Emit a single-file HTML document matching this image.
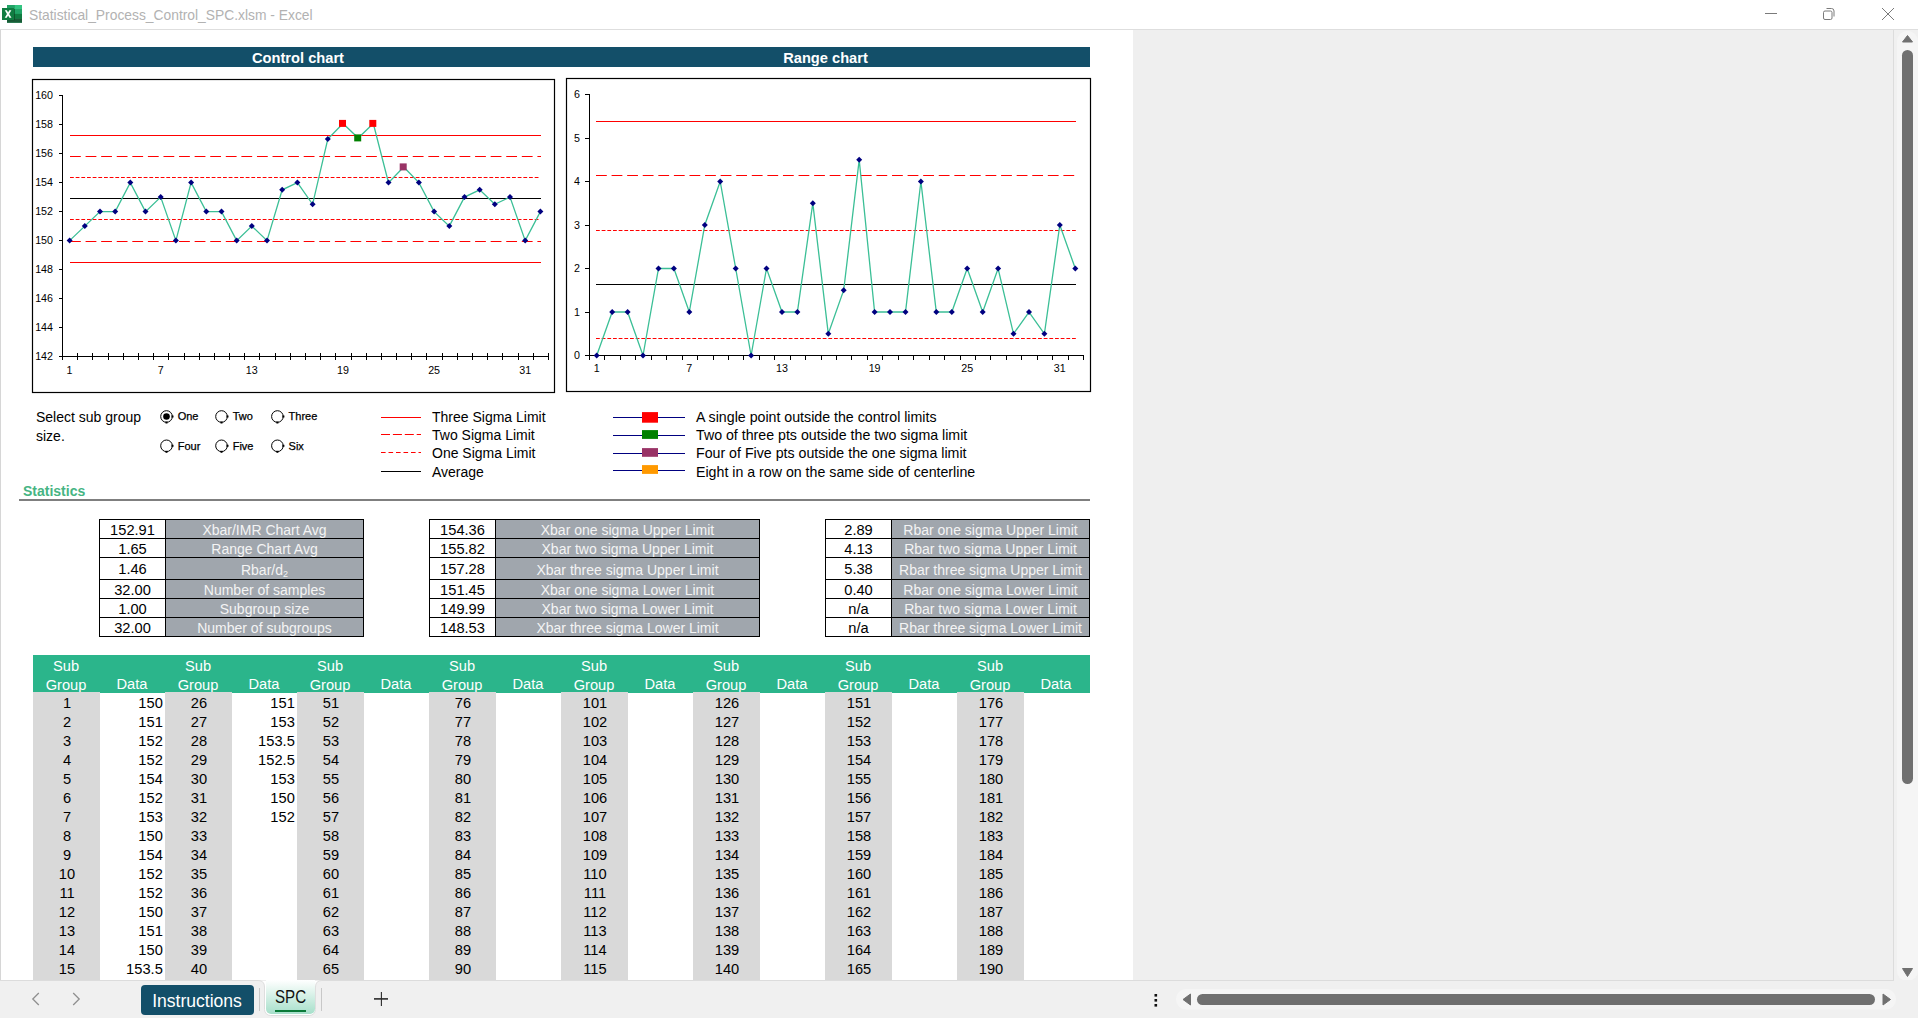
<!DOCTYPE html>
<html><head><meta charset="utf-8">
<style>
html,body{margin:0;padding:0;}
body{width:1918px;height:1018px;overflow:hidden;position:relative;background:#fff;font-family:"Liberation Sans", sans-serif;}
.abs{position:absolute;}
svg text{font-family:"Liberation Sans", sans-serif;}
.ax{font-size:10.7px;fill:#000;}
.rad{font-size:11px;fill:#000;stroke:#000;stroke-width:0.25px;}
.sv,.sl,.hd,.dc,.dr,.bl{position:absolute;}
.sv{background:#fff;color:#000;font-size:14.67px;text-align:center;}
.sl{background:#a0a6ad;color:#f4f4f4;font-size:14px;text-align:center;white-space:nowrap;}
.sl sub{font-size:9px;vertical-align:-2px;line-height:0;}
.bl{background:#000;}
.hd{color:#fff;font-size:14.67px;text-align:center;line-height:16px;}
.dc{font-size:14.67px;text-align:center;line-height:19px;height:19px;color:#000;}
.dr{font-size:14.67px;text-align:right;line-height:19px;height:19px;color:#000;}
.txt{position:absolute;font-size:14px;color:#000;white-space:nowrap;line-height:16px;}
</style></head><body>
<!-- title bar -->
<div class="abs" style="left:0;top:0;width:1918px;height:29px;background:#fff"></div>
<svg class="abs" style="left:0;top:0" width="24" height="28" viewBox="0 0 24 28">
  <rect x="7" y="5" width="15" height="17.7" fill="#21a366"/>
  <rect x="14.8" y="5" width="7.2" height="4.3" fill="#33c481"/>
  <rect x="14.8" y="9.3" width="7.2" height="4.6" fill="#21a366"/>
  <rect x="7" y="13.9" width="15" height="4.6" fill="#107c41"/>
  <rect x="7" y="18.5" width="15" height="4.2" fill="#185c37"/>
  <rect x="8" y="9" width="7" height="11.2" fill="#0b3d1f" opacity="0.6"/>
  <rect x="2" y="8" width="12" height="12" fill="#107c41"/>
  <path d="M4.8 10.2h2.1l1.2 2.3l1.2 -2.3h2.1l-2.2 3.8l2.3 3.8h-2.1l-1.3 -2.4l-1.3 2.4h-2.1l2.3 -3.8z" fill="#fff"/>
</svg>
<div class="txt" style="left:29px;top:5px;font-size:15px;color:#b2b2b2;line-height:19px;transform:scaleX(0.922);transform-origin:0 0">Statistical_Process_Control_SPC.xlsm - Excel</div>
<svg class="abs" style="left:1750px;top:0" width="168" height="29">
  <line x1="15" y1="13.5" x2="27" y2="13.5" stroke="#7a7a7a" stroke-width="1"/>
  <rect x="73.5" y="11" width="8.5" height="8.5" rx="1.5" fill="none" stroke="#7a7a7a" stroke-width="1"/>
  <path d="M76.5 8.5h5a2.5 2.5 0 0 1 2.5 2.5v5.5" fill="none" stroke="#7a7a7a" stroke-width="1"/>
  <path d="M132 8l12 12M144 8l-12 12" stroke="#7a7a7a" stroke-width="1"/>
</svg>
<div class="abs" style="left:0;top:29px;width:1918px;height:1px;background:#dedede"></div>
<!-- sheet area -->
<div class="abs" style="left:0;top:30px;width:1px;height:950px;background:#d6d6d6"></div>
<div class="abs" style="left:1133px;top:30px;width:760px;height:950px;background:#efefef"></div>
<div class="abs" style="left:1893px;top:30px;width:1px;height:950px;background:#dcdcdc"></div>
<div class="abs" style="left:1894px;top:30px;width:24px;height:950px;background:#f0f0f0"></div>
<div class="abs" style="left:1897px;top:31px;width:21px;height:950px;background:#f5f5f5;border-radius:10px"></div>
<svg class="abs" style="left:1894px;top:30px" width="24" height="950">
  <path d="M13.5 5.5l5 6.5h-10z" fill="#707070" stroke="#707070" stroke-width="1" stroke-linejoin="round"/>
  <rect x="8" y="20" width="11" height="734" rx="5.5" fill="#707070"/>
  <path d="M13.5 946.5l5 -8h-10z" fill="#707070" stroke="#707070" stroke-width="1" stroke-linejoin="round"/>
</svg>
<!-- chart headers -->
<div class="abs" style="left:33px;top:47px;width:1057px;height:20px;background:#134f69"></div>
<div class="txt" style="left:33px;top:49px;width:530px;text-align:center;color:#fff;font-weight:bold;font-size:14.67px;line-height:18px">Control chart</div>
<div class="txt" style="left:562px;top:49px;width:527px;text-align:center;color:#fff;font-weight:bold;font-size:14.67px;line-height:18px">Range chart</div>
<svg class="abs" style="left:0;top:0" width="1918" height="1018">
<rect x="32.5" y="79.5" width="522" height="313" fill="#fff" stroke="#000" stroke-width="1.2"/>
<line x1="62.5" y1="95" x2="62.5" y2="356.5" stroke="#000" stroke-width="1"/>
<line x1="62" y1="356.5" x2="548" y2="356.5" stroke="#000" stroke-width="1"/>
<line x1="59" y1="356.5" x2="62.5" y2="356.5" stroke="#000" stroke-width="1"/>
<text x="53" y="359.9" text-anchor="end" class="ax">142</text>
<line x1="59" y1="327.5" x2="62.5" y2="327.5" stroke="#000" stroke-width="1"/>
<text x="53" y="330.9" text-anchor="end" class="ax">144</text>
<line x1="59" y1="298.5" x2="62.5" y2="298.5" stroke="#000" stroke-width="1"/>
<text x="53" y="301.9" text-anchor="end" class="ax">146</text>
<line x1="59" y1="269.5" x2="62.5" y2="269.5" stroke="#000" stroke-width="1"/>
<text x="53" y="272.9" text-anchor="end" class="ax">148</text>
<line x1="59" y1="240.5" x2="62.5" y2="240.5" stroke="#000" stroke-width="1"/>
<text x="53" y="243.9" text-anchor="end" class="ax">150</text>
<line x1="59" y1="211.5" x2="62.5" y2="211.5" stroke="#000" stroke-width="1"/>
<text x="53" y="214.9" text-anchor="end" class="ax">152</text>
<line x1="59" y1="182.5" x2="62.5" y2="182.5" stroke="#000" stroke-width="1"/>
<text x="53" y="185.9" text-anchor="end" class="ax">154</text>
<line x1="59" y1="153.5" x2="62.5" y2="153.5" stroke="#000" stroke-width="1"/>
<text x="53" y="156.9" text-anchor="end" class="ax">156</text>
<line x1="59" y1="124.5" x2="62.5" y2="124.5" stroke="#000" stroke-width="1"/>
<text x="53" y="127.9" text-anchor="end" class="ax">158</text>
<line x1="59" y1="95.5" x2="62.5" y2="95.5" stroke="#000" stroke-width="1"/>
<text x="53" y="98.9" text-anchor="end" class="ax">160</text>
<line x1="62.5" y1="353" x2="62.5" y2="360" stroke="#000" stroke-width="1"/>
<line x1="77.5" y1="353" x2="77.5" y2="360" stroke="#000" stroke-width="1"/>
<line x1="92.5" y1="353" x2="92.5" y2="360" stroke="#000" stroke-width="1"/>
<line x1="108.5" y1="353" x2="108.5" y2="360" stroke="#000" stroke-width="1"/>
<line x1="123.5" y1="353" x2="123.5" y2="360" stroke="#000" stroke-width="1"/>
<line x1="138.5" y1="353" x2="138.5" y2="360" stroke="#000" stroke-width="1"/>
<line x1="153.5" y1="353" x2="153.5" y2="360" stroke="#000" stroke-width="1"/>
<line x1="168.5" y1="353" x2="168.5" y2="360" stroke="#000" stroke-width="1"/>
<line x1="184.5" y1="353" x2="184.5" y2="360" stroke="#000" stroke-width="1"/>
<line x1="199.5" y1="353" x2="199.5" y2="360" stroke="#000" stroke-width="1"/>
<line x1="214.5" y1="353" x2="214.5" y2="360" stroke="#000" stroke-width="1"/>
<line x1="229.5" y1="353" x2="229.5" y2="360" stroke="#000" stroke-width="1"/>
<line x1="244.5" y1="353" x2="244.5" y2="360" stroke="#000" stroke-width="1"/>
<line x1="259.5" y1="353" x2="259.5" y2="360" stroke="#000" stroke-width="1"/>
<line x1="275.5" y1="353" x2="275.5" y2="360" stroke="#000" stroke-width="1"/>
<line x1="290.5" y1="353" x2="290.5" y2="360" stroke="#000" stroke-width="1"/>
<line x1="305.5" y1="353" x2="305.5" y2="360" stroke="#000" stroke-width="1"/>
<line x1="320.5" y1="353" x2="320.5" y2="360" stroke="#000" stroke-width="1"/>
<line x1="335.5" y1="353" x2="335.5" y2="360" stroke="#000" stroke-width="1"/>
<line x1="351.5" y1="353" x2="351.5" y2="360" stroke="#000" stroke-width="1"/>
<line x1="366.5" y1="353" x2="366.5" y2="360" stroke="#000" stroke-width="1"/>
<line x1="381.5" y1="353" x2="381.5" y2="360" stroke="#000" stroke-width="1"/>
<line x1="396.5" y1="353" x2="396.5" y2="360" stroke="#000" stroke-width="1"/>
<line x1="411.5" y1="353" x2="411.5" y2="360" stroke="#000" stroke-width="1"/>
<line x1="426.5" y1="353" x2="426.5" y2="360" stroke="#000" stroke-width="1"/>
<line x1="442.5" y1="353" x2="442.5" y2="360" stroke="#000" stroke-width="1"/>
<line x1="457.5" y1="353" x2="457.5" y2="360" stroke="#000" stroke-width="1"/>
<line x1="472.5" y1="353" x2="472.5" y2="360" stroke="#000" stroke-width="1"/>
<line x1="487.5" y1="353" x2="487.5" y2="360" stroke="#000" stroke-width="1"/>
<line x1="502.5" y1="353" x2="502.5" y2="360" stroke="#000" stroke-width="1"/>
<line x1="518.5" y1="353" x2="518.5" y2="360" stroke="#000" stroke-width="1"/>
<line x1="533.5" y1="353" x2="533.5" y2="360" stroke="#000" stroke-width="1"/>
<line x1="548.5" y1="353" x2="548.5" y2="360" stroke="#000" stroke-width="1"/>
<text x="69.6" y="374" text-anchor="middle" class="ax">1</text>
<text x="160.7" y="374" text-anchor="middle" class="ax">7</text>
<text x="251.8" y="374" text-anchor="middle" class="ax">13</text>
<text x="343.0" y="374" text-anchor="middle" class="ax">19</text>
<text x="434.1" y="374" text-anchor="middle" class="ax">25</text>
<text x="525.2" y="374" text-anchor="middle" class="ax">31</text>
<line x1="70.0" y1="135.5" x2="541.0" y2="135.5" stroke="#ff0000" stroke-width="1"/>
<line x1="70.0" y1="156.5" x2="541.0" y2="156.5" stroke="#ff0000" stroke-width="1" stroke-dasharray="10.8 4.78"/>
<line x1="70.0" y1="177.5" x2="539.0" y2="177.5" stroke="#ff0000" stroke-width="1" stroke-dasharray="3.8 1.867"/>
<line x1="70.0" y1="198.5" x2="541.0" y2="198.5" stroke="#000000" stroke-width="1"/>
<line x1="70.0" y1="219.5" x2="539.0" y2="219.5" stroke="#ff0000" stroke-width="1" stroke-dasharray="3.8 1.867"/>
<line x1="70.0" y1="241.5" x2="541.0" y2="241.5" stroke="#ff0000" stroke-width="1" stroke-dasharray="10.8 4.78"/>
<line x1="70.0" y1="262.5" x2="541.0" y2="262.5" stroke="#ff0000" stroke-width="1"/>
<polyline points="69.6,240.6 84.8,226.1 100.0,211.6 115.2,211.6 130.3,182.6 145.5,211.6 160.7,197.1 175.9,240.6 191.1,182.6 206.3,211.6 221.5,211.6 236.7,240.6 251.8,226.1 267.0,240.6 282.2,189.8 297.4,182.6 312.6,204.3 327.8,139.1 343.0,123.5 358.2,138.0 373.3,123.5 388.5,182.6 403.7,167.0 418.9,182.6 434.1,211.6 449.3,226.1 464.5,197.1 479.7,189.8 494.8,204.3 510.0,197.1 525.2,240.6 540.4,211.6" fill="none" stroke="#3bbf96" stroke-width="1.3"/>
<path d="M69.6 237.6l3 3l-3 3l-3 -3z" fill="#000080"/>
<path d="M84.8 223.1l3 3l-3 3l-3 -3z" fill="#000080"/>
<path d="M100.0 208.6l3 3l-3 3l-3 -3z" fill="#000080"/>
<path d="M115.2 208.6l3 3l-3 3l-3 -3z" fill="#000080"/>
<path d="M130.3 179.6l3 3l-3 3l-3 -3z" fill="#000080"/>
<path d="M145.5 208.6l3 3l-3 3l-3 -3z" fill="#000080"/>
<path d="M160.7 194.1l3 3l-3 3l-3 -3z" fill="#000080"/>
<path d="M175.9 237.6l3 3l-3 3l-3 -3z" fill="#000080"/>
<path d="M191.1 179.6l3 3l-3 3l-3 -3z" fill="#000080"/>
<path d="M206.3 208.6l3 3l-3 3l-3 -3z" fill="#000080"/>
<path d="M221.5 208.6l3 3l-3 3l-3 -3z" fill="#000080"/>
<path d="M236.7 237.6l3 3l-3 3l-3 -3z" fill="#000080"/>
<path d="M251.8 223.1l3 3l-3 3l-3 -3z" fill="#000080"/>
<path d="M267.0 237.6l3 3l-3 3l-3 -3z" fill="#000080"/>
<path d="M282.2 186.8l3 3l-3 3l-3 -3z" fill="#000080"/>
<path d="M297.4 179.6l3 3l-3 3l-3 -3z" fill="#000080"/>
<path d="M312.6 201.3l3 3l-3 3l-3 -3z" fill="#000080"/>
<path d="M327.8 136.1l3 3l-3 3l-3 -3z" fill="#000080"/>
<rect x="339.0" y="119.9" width="7" height="7" fill="#ff0000"/>
<rect x="354.2" y="134.4" width="7" height="7" fill="#008000"/>
<rect x="369.3" y="119.9" width="7" height="7" fill="#ff0000"/>
<path d="M388.5 179.6l3 3l-3 3l-3 -3z" fill="#000080"/>
<rect x="399.7" y="163.4" width="7" height="7" fill="#993366"/>
<path d="M418.9 179.6l3 3l-3 3l-3 -3z" fill="#000080"/>
<path d="M434.1 208.6l3 3l-3 3l-3 -3z" fill="#000080"/>
<path d="M449.3 223.1l3 3l-3 3l-3 -3z" fill="#000080"/>
<path d="M464.5 194.1l3 3l-3 3l-3 -3z" fill="#000080"/>
<path d="M479.7 186.8l3 3l-3 3l-3 -3z" fill="#000080"/>
<path d="M494.8 201.3l3 3l-3 3l-3 -3z" fill="#000080"/>
<path d="M510.0 194.1l3 3l-3 3l-3 -3z" fill="#000080"/>
<path d="M525.2 237.6l3 3l-3 3l-3 -3z" fill="#000080"/>
<path d="M540.4 208.6l3 3l-3 3l-3 -3z" fill="#000080"/>
<rect x="566.5" y="78.5" width="524" height="313" fill="#fff" stroke="#000" stroke-width="1.2"/>
<line x1="589.5" y1="94" x2="589.5" y2="356" stroke="#000" stroke-width="1"/>
<line x1="585" y1="355.5" x2="1084" y2="355.5" stroke="#000" stroke-width="1"/>
<line x1="585" y1="355.5" x2="589.5" y2="355.5" stroke="#000" stroke-width="1"/>
<text x="580" y="359.4" text-anchor="end" class="ax">0</text>
<line x1="585" y1="312.5" x2="589.5" y2="312.5" stroke="#000" stroke-width="1"/>
<text x="580" y="315.9" text-anchor="end" class="ax">1</text>
<line x1="585" y1="268.5" x2="589.5" y2="268.5" stroke="#000" stroke-width="1"/>
<text x="580" y="272.4" text-anchor="end" class="ax">2</text>
<line x1="585" y1="225.5" x2="589.5" y2="225.5" stroke="#000" stroke-width="1"/>
<text x="580" y="228.9" text-anchor="end" class="ax">3</text>
<line x1="585" y1="181.5" x2="589.5" y2="181.5" stroke="#000" stroke-width="1"/>
<text x="580" y="185.4" text-anchor="end" class="ax">4</text>
<line x1="585" y1="138.5" x2="589.5" y2="138.5" stroke="#000" stroke-width="1"/>
<text x="580" y="141.9" text-anchor="end" class="ax">5</text>
<line x1="585" y1="94.5" x2="589.5" y2="94.5" stroke="#000" stroke-width="1"/>
<text x="580" y="98.4" text-anchor="end" class="ax">6</text>
<line x1="589.5" y1="355.5" x2="589.5" y2="360" stroke="#000" stroke-width="1"/>
<line x1="604.5" y1="355.5" x2="604.5" y2="360" stroke="#000" stroke-width="1"/>
<line x1="620.5" y1="355.5" x2="620.5" y2="360" stroke="#000" stroke-width="1"/>
<line x1="635.5" y1="355.5" x2="635.5" y2="360" stroke="#000" stroke-width="1"/>
<line x1="651.5" y1="355.5" x2="651.5" y2="360" stroke="#000" stroke-width="1"/>
<line x1="666.5" y1="355.5" x2="666.5" y2="360" stroke="#000" stroke-width="1"/>
<line x1="682.5" y1="355.5" x2="682.5" y2="360" stroke="#000" stroke-width="1"/>
<line x1="697.5" y1="355.5" x2="697.5" y2="360" stroke="#000" stroke-width="1"/>
<line x1="713.5" y1="355.5" x2="713.5" y2="360" stroke="#000" stroke-width="1"/>
<line x1="728.5" y1="355.5" x2="728.5" y2="360" stroke="#000" stroke-width="1"/>
<line x1="743.5" y1="355.5" x2="743.5" y2="360" stroke="#000" stroke-width="1"/>
<line x1="759.5" y1="355.5" x2="759.5" y2="360" stroke="#000" stroke-width="1"/>
<line x1="774.5" y1="355.5" x2="774.5" y2="360" stroke="#000" stroke-width="1"/>
<line x1="790.5" y1="355.5" x2="790.5" y2="360" stroke="#000" stroke-width="1"/>
<line x1="805.5" y1="355.5" x2="805.5" y2="360" stroke="#000" stroke-width="1"/>
<line x1="821.5" y1="355.5" x2="821.5" y2="360" stroke="#000" stroke-width="1"/>
<line x1="836.5" y1="355.5" x2="836.5" y2="360" stroke="#000" stroke-width="1"/>
<line x1="851.5" y1="355.5" x2="851.5" y2="360" stroke="#000" stroke-width="1"/>
<line x1="867.5" y1="355.5" x2="867.5" y2="360" stroke="#000" stroke-width="1"/>
<line x1="882.5" y1="355.5" x2="882.5" y2="360" stroke="#000" stroke-width="1"/>
<line x1="898.5" y1="355.5" x2="898.5" y2="360" stroke="#000" stroke-width="1"/>
<line x1="913.5" y1="355.5" x2="913.5" y2="360" stroke="#000" stroke-width="1"/>
<line x1="929.5" y1="355.5" x2="929.5" y2="360" stroke="#000" stroke-width="1"/>
<line x1="944.5" y1="355.5" x2="944.5" y2="360" stroke="#000" stroke-width="1"/>
<line x1="960.5" y1="355.5" x2="960.5" y2="360" stroke="#000" stroke-width="1"/>
<line x1="975.5" y1="355.5" x2="975.5" y2="360" stroke="#000" stroke-width="1"/>
<line x1="990.5" y1="355.5" x2="990.5" y2="360" stroke="#000" stroke-width="1"/>
<line x1="1006.5" y1="355.5" x2="1006.5" y2="360" stroke="#000" stroke-width="1"/>
<line x1="1021.5" y1="355.5" x2="1021.5" y2="360" stroke="#000" stroke-width="1"/>
<line x1="1037.5" y1="355.5" x2="1037.5" y2="360" stroke="#000" stroke-width="1"/>
<line x1="1052.5" y1="355.5" x2="1052.5" y2="360" stroke="#000" stroke-width="1"/>
<line x1="1068.5" y1="355.5" x2="1068.5" y2="360" stroke="#000" stroke-width="1"/>
<line x1="1083.5" y1="355.5" x2="1083.5" y2="360" stroke="#000" stroke-width="1"/>
<text x="596.7" y="372" text-anchor="middle" class="ax">1</text>
<text x="689.3" y="372" text-anchor="middle" class="ax">7</text>
<text x="782.0" y="372" text-anchor="middle" class="ax">13</text>
<text x="874.6" y="372" text-anchor="middle" class="ax">19</text>
<text x="967.2" y="372" text-anchor="middle" class="ax">25</text>
<text x="1059.8" y="372" text-anchor="middle" class="ax">31</text>
<line x1="596.0" y1="121.5" x2="1076.0" y2="121.5" stroke="#ff0000" stroke-width="1"/>
<line x1="596.0" y1="175.5" x2="1076.0" y2="175.5" stroke="#ff0000" stroke-width="1" stroke-dasharray="10.8 4.78"/>
<line x1="596.0" y1="230.5" x2="1076.0" y2="230.5" stroke="#ff0000" stroke-width="1" stroke-dasharray="3.8 1.867"/>
<line x1="596.0" y1="284.5" x2="1076.0" y2="284.5" stroke="#000000" stroke-width="1"/>
<line x1="596.0" y1="338.5" x2="1076.0" y2="338.5" stroke="#ff0000" stroke-width="1" stroke-dasharray="3.8 1.867"/>
<polyline points="596.7,355.5 612.2,312.0 627.6,312.0 643.0,355.5 658.5,268.5 673.9,268.5 689.3,312.0 704.8,225.0 720.2,181.5 735.7,268.5 751.1,355.5 766.5,268.5 782.0,312.0 797.4,312.0 812.8,203.2 828.3,333.8 843.7,290.2 859.2,159.8 874.6,312.0 890.0,312.0 905.5,312.0 920.9,181.5 936.3,312.0 951.8,312.0 967.2,268.5 982.7,312.0 998.1,268.5 1013.5,333.8 1029.0,312.0 1044.4,333.8 1059.8,225.0 1075.3,268.5" fill="none" stroke="#3bbf96" stroke-width="1.3"/>
<path d="M596.7 352.5l3 3l-3 3l-3 -3z" fill="#000080"/>
<path d="M612.2 309.0l3 3l-3 3l-3 -3z" fill="#000080"/>
<path d="M627.6 309.0l3 3l-3 3l-3 -3z" fill="#000080"/>
<path d="M643.0 352.5l3 3l-3 3l-3 -3z" fill="#000080"/>
<path d="M658.5 265.5l3 3l-3 3l-3 -3z" fill="#000080"/>
<path d="M673.9 265.5l3 3l-3 3l-3 -3z" fill="#000080"/>
<path d="M689.3 309.0l3 3l-3 3l-3 -3z" fill="#000080"/>
<path d="M704.8 222.0l3 3l-3 3l-3 -3z" fill="#000080"/>
<path d="M720.2 178.5l3 3l-3 3l-3 -3z" fill="#000080"/>
<path d="M735.7 265.5l3 3l-3 3l-3 -3z" fill="#000080"/>
<path d="M751.1 352.5l3 3l-3 3l-3 -3z" fill="#000080"/>
<path d="M766.5 265.5l3 3l-3 3l-3 -3z" fill="#000080"/>
<path d="M782.0 309.0l3 3l-3 3l-3 -3z" fill="#000080"/>
<path d="M797.4 309.0l3 3l-3 3l-3 -3z" fill="#000080"/>
<path d="M812.8 200.2l3 3l-3 3l-3 -3z" fill="#000080"/>
<path d="M828.3 330.8l3 3l-3 3l-3 -3z" fill="#000080"/>
<path d="M843.7 287.2l3 3l-3 3l-3 -3z" fill="#000080"/>
<path d="M859.2 156.8l3 3l-3 3l-3 -3z" fill="#000080"/>
<path d="M874.6 309.0l3 3l-3 3l-3 -3z" fill="#000080"/>
<path d="M890.0 309.0l3 3l-3 3l-3 -3z" fill="#000080"/>
<path d="M905.5 309.0l3 3l-3 3l-3 -3z" fill="#000080"/>
<path d="M920.9 178.5l3 3l-3 3l-3 -3z" fill="#000080"/>
<path d="M936.3 309.0l3 3l-3 3l-3 -3z" fill="#000080"/>
<path d="M951.8 309.0l3 3l-3 3l-3 -3z" fill="#000080"/>
<path d="M967.2 265.5l3 3l-3 3l-3 -3z" fill="#000080"/>
<path d="M982.7 309.0l3 3l-3 3l-3 -3z" fill="#000080"/>
<path d="M998.1 265.5l3 3l-3 3l-3 -3z" fill="#000080"/>
<path d="M1013.5 330.8l3 3l-3 3l-3 -3z" fill="#000080"/>
<path d="M1029.0 309.0l3 3l-3 3l-3 -3z" fill="#000080"/>
<path d="M1044.4 330.8l3 3l-3 3l-3 -3z" fill="#000080"/>
<path d="M1059.8 222.0l3 3l-3 3l-3 -3z" fill="#000080"/>
<path d="M1075.3 265.5l3 3l-3 3l-3 -3z" fill="#000080"/>
<line x1="381.0" y1="417.5" x2="421.0" y2="417.5" stroke="#ff0000" stroke-width="1.2"/>
<line x1="381.0" y1="434.5" x2="421.0" y2="434.5" stroke="#ff0000" stroke-width="1.1" stroke-dasharray="9 2.9"/>
<line x1="381.0" y1="452.5" x2="421.0" y2="452.5" stroke="#ff0000" stroke-width="1.1" stroke-dasharray="4.6 2.9"/>
<line x1="381.0" y1="471.5" x2="421.0" y2="471.5" stroke="#000000" stroke-width="1.2"/>
<line x1="613.0" y1="417.5" x2="685.0" y2="417.5" stroke="#000080" stroke-width="1"/>
<rect x="642" y="412.1" width="16" height="10.6" fill="#ff0000"/>
<line x1="613.0" y1="435.5" x2="685.0" y2="435.5" stroke="#000080" stroke-width="1"/>
<rect x="642" y="430.1" width="16" height="8.8" fill="#008000"/>
<line x1="613.0" y1="453.5" x2="685.0" y2="453.5" stroke="#000080" stroke-width="1"/>
<rect x="642" y="448.1" width="16" height="8.7" fill="#993366"/>
<line x1="613.0" y1="470.5" x2="685.0" y2="470.5" stroke="#000080" stroke-width="1"/>
<rect x="642" y="465.1" width="16" height="8.8" fill="#ff9900"/>
<circle cx="166.5" cy="416.5" r="5.8" fill="#fff" stroke="#000" stroke-width="1"/>
<rect x="165.5" y="421.5" width="2" height="2" fill="#000"/>
<rect x="171.5" y="415.5" width="2" height="2" fill="#000"/>
<circle cx="166.5" cy="416.5" r="3.3" fill="#000"/>
<text x="177.7" y="420.4" class="rad">One</text>
<circle cx="221.5" cy="416.5" r="5.8" fill="#fff" stroke="#000" stroke-width="1"/>
<rect x="220.5" y="421.5" width="2" height="2" fill="#000"/>
<rect x="226.5" y="415.5" width="2" height="2" fill="#000"/>
<text x="232.7" y="420.4" class="rad">Two</text>
<circle cx="277.4" cy="416.5" r="5.8" fill="#fff" stroke="#000" stroke-width="1"/>
<rect x="276.4" y="421.5" width="2" height="2" fill="#000"/>
<rect x="282.4" y="415.5" width="2" height="2" fill="#000"/>
<text x="288.6" y="420.4" class="rad">Three</text>
<circle cx="166.5" cy="445.8" r="5.8" fill="#fff" stroke="#000" stroke-width="1"/>
<rect x="165.5" y="450.8" width="2" height="2" fill="#000"/>
<rect x="171.5" y="444.8" width="2" height="2" fill="#000"/>
<text x="177.7" y="449.7" class="rad">Four</text>
<circle cx="221.5" cy="445.8" r="5.8" fill="#fff" stroke="#000" stroke-width="1"/>
<rect x="220.5" y="450.8" width="2" height="2" fill="#000"/>
<rect x="226.5" y="444.8" width="2" height="2" fill="#000"/>
<text x="232.7" y="449.7" class="rad">Five</text>
<circle cx="277.4" cy="445.8" r="5.8" fill="#fff" stroke="#000" stroke-width="1"/>
<rect x="276.4" y="450.8" width="2" height="2" fill="#000"/>
<rect x="282.4" y="444.8" width="2" height="2" fill="#000"/>
<text x="288.6" y="449.7" class="rad">Six</text>
<rect x="19" y="499" width="1071" height="2" fill="#7f7f7f"/>
</svg>
<!-- legend text -->
<div class="txt" style="left:36px;top:408px;line-height:19px;white-space:normal;width:120px">Select sub group size.</div>
<div class="txt" style="left:432px;top:409px">Three Sigma Limit</div>
<div class="txt" style="left:432px;top:427px">Two Sigma Limit</div>
<div class="txt" style="left:432px;top:445px">One Sigma Limit</div>
<div class="txt" style="left:432px;top:464px">Average</div>
<div class="txt" style="left:696px;top:409px;font-size:14.2px">A single point outside the control limits</div>
<div class="txt" style="left:696px;top:427px;font-size:14.2px">Two of three pts outside the two sigma limit</div>
<div class="txt" style="left:696px;top:445px;font-size:14.2px">Four of Five pts outside the one sigma limit</div>
<div class="txt" style="left:696px;top:464px;font-size:14.2px">Eight in a row on the same side of centerline</div>
<div class="txt" style="left:23px;top:482.5px;font-weight:bold;font-size:14px;color:#46b483">Statistics</div>
<div class="sv" style="left:99.5px;top:519.5px;width:66.0px;height:19.0px;line-height:21.6px">152.91</div>
<div class="sl" style="left:165.5px;top:519.5px;width:198.0px;height:19.0px;line-height:21.0px">Xbar/IMR Chart Avg</div>
<div class="sv" style="left:99.5px;top:538.5px;width:66.0px;height:19.0px;line-height:21.6px">1.65</div>
<div class="sl" style="left:165.5px;top:538.5px;width:198.0px;height:19.0px;line-height:21.0px">Range Chart Avg</div>
<div class="sv" style="left:99.5px;top:557.5px;width:66.0px;height:22.0px;line-height:22.6px">1.46</div>
<div class="sl" style="left:165.5px;top:557.5px;width:198.0px;height:22.0px;line-height:24.0px">Rbar/d<sub>2</sub></div>
<div class="sv" style="left:99.5px;top:579.5px;width:66.0px;height:19.0px;line-height:21.6px">32.00</div>
<div class="sl" style="left:165.5px;top:579.5px;width:198.0px;height:19.0px;line-height:21.0px">Number of samples</div>
<div class="sv" style="left:99.5px;top:598.5px;width:66.0px;height:19.0px;line-height:21.6px">1.00</div>
<div class="sl" style="left:165.5px;top:598.5px;width:198.0px;height:19.0px;line-height:21.0px">Subgroup size</div>
<div class="sv" style="left:99.5px;top:617.5px;width:66.0px;height:19.0px;line-height:21.6px">32.00</div>
<div class="sl" style="left:165.5px;top:617.5px;width:198.0px;height:19.0px;line-height:21.0px">Number of subgroups</div>
<div class="bl" style="left:99.0px;top:518.9px;width:265.0px;height:1.2px"></div>
<div class="bl" style="left:99.0px;top:537.9px;width:265.0px;height:1.2px"></div>
<div class="bl" style="left:99.0px;top:556.9px;width:265.0px;height:1.2px"></div>
<div class="bl" style="left:99.0px;top:578.9px;width:265.0px;height:1.2px"></div>
<div class="bl" style="left:99.0px;top:597.9px;width:265.0px;height:1.2px"></div>
<div class="bl" style="left:99.0px;top:616.9px;width:265.0px;height:1.2px"></div>
<div class="bl" style="left:99.0px;top:635.9px;width:265.0px;height:1.2px"></div>
<div class="bl" style="left:98.9px;top:519.0px;width:1.2px;height:118.0px"></div>
<div class="bl" style="left:164.9px;top:519.0px;width:1.2px;height:118.0px"></div>
<div class="bl" style="left:362.9px;top:519.0px;width:1.2px;height:118.0px"></div>
<div class="sv" style="left:429.5px;top:519.5px;width:66.0px;height:19.0px;line-height:21.6px">154.36</div>
<div class="sl" style="left:495.5px;top:519.5px;width:264.0px;height:19.0px;line-height:21.0px">Xbar one sigma Upper Limit</div>
<div class="sv" style="left:429.5px;top:538.5px;width:66.0px;height:19.0px;line-height:21.6px">155.82</div>
<div class="sl" style="left:495.5px;top:538.5px;width:264.0px;height:19.0px;line-height:21.0px">Xbar two sigma Upper Limit</div>
<div class="sv" style="left:429.5px;top:557.5px;width:66.0px;height:22.0px;line-height:22.6px">157.28</div>
<div class="sl" style="left:495.5px;top:557.5px;width:264.0px;height:22.0px;line-height:24.0px">Xbar three sigma Upper Limit</div>
<div class="sv" style="left:429.5px;top:579.5px;width:66.0px;height:19.0px;line-height:21.6px">151.45</div>
<div class="sl" style="left:495.5px;top:579.5px;width:264.0px;height:19.0px;line-height:21.0px">Xbar one sigma Lower Limit</div>
<div class="sv" style="left:429.5px;top:598.5px;width:66.0px;height:19.0px;line-height:21.6px">149.99</div>
<div class="sl" style="left:495.5px;top:598.5px;width:264.0px;height:19.0px;line-height:21.0px">Xbar two sigma Lower Limit</div>
<div class="sv" style="left:429.5px;top:617.5px;width:66.0px;height:19.0px;line-height:21.6px">148.53</div>
<div class="sl" style="left:495.5px;top:617.5px;width:264.0px;height:19.0px;line-height:21.0px">Xbar three sigma Lower Limit</div>
<div class="bl" style="left:429.0px;top:518.9px;width:331.0px;height:1.2px"></div>
<div class="bl" style="left:429.0px;top:537.9px;width:331.0px;height:1.2px"></div>
<div class="bl" style="left:429.0px;top:556.9px;width:331.0px;height:1.2px"></div>
<div class="bl" style="left:429.0px;top:578.9px;width:331.0px;height:1.2px"></div>
<div class="bl" style="left:429.0px;top:597.9px;width:331.0px;height:1.2px"></div>
<div class="bl" style="left:429.0px;top:616.9px;width:331.0px;height:1.2px"></div>
<div class="bl" style="left:429.0px;top:635.9px;width:331.0px;height:1.2px"></div>
<div class="bl" style="left:428.9px;top:519.0px;width:1.2px;height:118.0px"></div>
<div class="bl" style="left:494.9px;top:519.0px;width:1.2px;height:118.0px"></div>
<div class="bl" style="left:758.9px;top:519.0px;width:1.2px;height:118.0px"></div>
<div class="sv" style="left:825.5px;top:519.5px;width:66.0px;height:19.0px;line-height:21.6px">2.89</div>
<div class="sl" style="left:891.5px;top:519.5px;width:198.0px;height:19.0px;line-height:21.0px">Rbar one sigma Upper Limit</div>
<div class="sv" style="left:825.5px;top:538.5px;width:66.0px;height:19.0px;line-height:21.6px">4.13</div>
<div class="sl" style="left:891.5px;top:538.5px;width:198.0px;height:19.0px;line-height:21.0px">Rbar two sigma Upper Limit</div>
<div class="sv" style="left:825.5px;top:557.5px;width:66.0px;height:22.0px;line-height:22.6px">5.38</div>
<div class="sl" style="left:891.5px;top:557.5px;width:198.0px;height:22.0px;line-height:24.0px">Rbar three sigma Upper Limit</div>
<div class="sv" style="left:825.5px;top:579.5px;width:66.0px;height:19.0px;line-height:21.6px">0.40</div>
<div class="sl" style="left:891.5px;top:579.5px;width:198.0px;height:19.0px;line-height:21.0px">Rbar one sigma Lower Limit</div>
<div class="sv" style="left:825.5px;top:598.5px;width:66.0px;height:19.0px;line-height:21.6px">n/a</div>
<div class="sl" style="left:891.5px;top:598.5px;width:198.0px;height:19.0px;line-height:21.0px">Rbar two sigma Lower Limit</div>
<div class="sv" style="left:825.5px;top:617.5px;width:66.0px;height:19.0px;line-height:21.6px">n/a</div>
<div class="sl" style="left:891.5px;top:617.5px;width:198.0px;height:19.0px;line-height:21.0px">Rbar three sigma Lower Limit</div>
<div class="bl" style="left:825.0px;top:518.9px;width:265.0px;height:1.2px"></div>
<div class="bl" style="left:825.0px;top:537.9px;width:265.0px;height:1.2px"></div>
<div class="bl" style="left:825.0px;top:556.9px;width:265.0px;height:1.2px"></div>
<div class="bl" style="left:825.0px;top:578.9px;width:265.0px;height:1.2px"></div>
<div class="bl" style="left:825.0px;top:597.9px;width:265.0px;height:1.2px"></div>
<div class="bl" style="left:825.0px;top:616.9px;width:265.0px;height:1.2px"></div>
<div class="bl" style="left:825.0px;top:635.9px;width:265.0px;height:1.2px"></div>
<div class="bl" style="left:824.9px;top:519.0px;width:1.2px;height:118.0px"></div>
<div class="bl" style="left:890.9px;top:519.0px;width:1.2px;height:118.0px"></div>
<div class="bl" style="left:1088.9px;top:519.0px;width:1.2px;height:118.0px"></div>
<div style="position:absolute;left:33px;top:655px;width:1057px;height:38px;background:#2bb58b"></div>
<div class="hd" style="left:33.0px;top:658px;width:66.0px">Sub</div>
<div class="hd" style="left:33.0px;top:677px;width:66.0px">Group</div>
<div class="hd" style="left:99.0px;top:676px;width:66.0px">Data</div>
<div style="position:absolute;left:33.0px;top:692px;width:66.7px;height:288px;background:#d9d9d9"></div>
<div class="hd" style="left:165.0px;top:658px;width:66.0px">Sub</div>
<div class="hd" style="left:165.0px;top:677px;width:66.0px">Group</div>
<div class="hd" style="left:231.0px;top:676px;width:66.0px">Data</div>
<div style="position:absolute;left:165.0px;top:692px;width:66.7px;height:288px;background:#d9d9d9"></div>
<div class="hd" style="left:297.0px;top:658px;width:66.0px">Sub</div>
<div class="hd" style="left:297.0px;top:677px;width:66.0px">Group</div>
<div class="hd" style="left:363.0px;top:676px;width:66.0px">Data</div>
<div style="position:absolute;left:297.0px;top:692px;width:66.7px;height:288px;background:#d9d9d9"></div>
<div class="hd" style="left:429.0px;top:658px;width:66.0px">Sub</div>
<div class="hd" style="left:429.0px;top:677px;width:66.0px">Group</div>
<div class="hd" style="left:495.0px;top:676px;width:66.0px">Data</div>
<div style="position:absolute;left:429.0px;top:692px;width:66.7px;height:288px;background:#d9d9d9"></div>
<div class="hd" style="left:561.0px;top:658px;width:66.0px">Sub</div>
<div class="hd" style="left:561.0px;top:677px;width:66.0px">Group</div>
<div class="hd" style="left:627.0px;top:676px;width:66.0px">Data</div>
<div style="position:absolute;left:561.0px;top:692px;width:66.7px;height:288px;background:#d9d9d9"></div>
<div class="hd" style="left:693.0px;top:658px;width:66.0px">Sub</div>
<div class="hd" style="left:693.0px;top:677px;width:66.0px">Group</div>
<div class="hd" style="left:759.0px;top:676px;width:66.0px">Data</div>
<div style="position:absolute;left:693.0px;top:692px;width:66.7px;height:288px;background:#d9d9d9"></div>
<div class="hd" style="left:825.0px;top:658px;width:66.0px">Sub</div>
<div class="hd" style="left:825.0px;top:677px;width:66.0px">Group</div>
<div class="hd" style="left:891.0px;top:676px;width:66.0px">Data</div>
<div style="position:absolute;left:825.0px;top:692px;width:66.7px;height:288px;background:#d9d9d9"></div>
<div class="hd" style="left:957.0px;top:658px;width:66.0px">Sub</div>
<div class="hd" style="left:957.0px;top:677px;width:66.0px">Group</div>
<div class="hd" style="left:1023.0px;top:676px;width:66.0px">Data</div>
<div style="position:absolute;left:957.0px;top:692px;width:66.7px;height:288px;background:#d9d9d9"></div>
<div class="dc" style="left:34.0px;top:694px;width:66.0px">1</div>
<div class="dr" style="left:99.0px;top:694px;width:63.8px">150</div>
<div class="dc" style="left:166.0px;top:694px;width:66.0px">26</div>
<div class="dr" style="left:231.0px;top:694px;width:63.8px">151</div>
<div class="dc" style="left:298.0px;top:694px;width:66.0px">51</div>
<div class="dc" style="left:430.0px;top:694px;width:66.0px">76</div>
<div class="dc" style="left:562.0px;top:694px;width:66.0px">101</div>
<div class="dc" style="left:694.0px;top:694px;width:66.0px">126</div>
<div class="dc" style="left:826.0px;top:694px;width:66.0px">151</div>
<div class="dc" style="left:958.0px;top:694px;width:66.0px">176</div>
<div class="dc" style="left:34.0px;top:713px;width:66.0px">2</div>
<div class="dr" style="left:99.0px;top:713px;width:63.8px">151</div>
<div class="dc" style="left:166.0px;top:713px;width:66.0px">27</div>
<div class="dr" style="left:231.0px;top:713px;width:63.8px">153</div>
<div class="dc" style="left:298.0px;top:713px;width:66.0px">52</div>
<div class="dc" style="left:430.0px;top:713px;width:66.0px">77</div>
<div class="dc" style="left:562.0px;top:713px;width:66.0px">102</div>
<div class="dc" style="left:694.0px;top:713px;width:66.0px">127</div>
<div class="dc" style="left:826.0px;top:713px;width:66.0px">152</div>
<div class="dc" style="left:958.0px;top:713px;width:66.0px">177</div>
<div class="dc" style="left:34.0px;top:732px;width:66.0px">3</div>
<div class="dr" style="left:99.0px;top:732px;width:63.8px">152</div>
<div class="dc" style="left:166.0px;top:732px;width:66.0px">28</div>
<div class="dr" style="left:231.0px;top:732px;width:63.8px">153.5</div>
<div class="dc" style="left:298.0px;top:732px;width:66.0px">53</div>
<div class="dc" style="left:430.0px;top:732px;width:66.0px">78</div>
<div class="dc" style="left:562.0px;top:732px;width:66.0px">103</div>
<div class="dc" style="left:694.0px;top:732px;width:66.0px">128</div>
<div class="dc" style="left:826.0px;top:732px;width:66.0px">153</div>
<div class="dc" style="left:958.0px;top:732px;width:66.0px">178</div>
<div class="dc" style="left:34.0px;top:751px;width:66.0px">4</div>
<div class="dr" style="left:99.0px;top:751px;width:63.8px">152</div>
<div class="dc" style="left:166.0px;top:751px;width:66.0px">29</div>
<div class="dr" style="left:231.0px;top:751px;width:63.8px">152.5</div>
<div class="dc" style="left:298.0px;top:751px;width:66.0px">54</div>
<div class="dc" style="left:430.0px;top:751px;width:66.0px">79</div>
<div class="dc" style="left:562.0px;top:751px;width:66.0px">104</div>
<div class="dc" style="left:694.0px;top:751px;width:66.0px">129</div>
<div class="dc" style="left:826.0px;top:751px;width:66.0px">154</div>
<div class="dc" style="left:958.0px;top:751px;width:66.0px">179</div>
<div class="dc" style="left:34.0px;top:770px;width:66.0px">5</div>
<div class="dr" style="left:99.0px;top:770px;width:63.8px">154</div>
<div class="dc" style="left:166.0px;top:770px;width:66.0px">30</div>
<div class="dr" style="left:231.0px;top:770px;width:63.8px">153</div>
<div class="dc" style="left:298.0px;top:770px;width:66.0px">55</div>
<div class="dc" style="left:430.0px;top:770px;width:66.0px">80</div>
<div class="dc" style="left:562.0px;top:770px;width:66.0px">105</div>
<div class="dc" style="left:694.0px;top:770px;width:66.0px">130</div>
<div class="dc" style="left:826.0px;top:770px;width:66.0px">155</div>
<div class="dc" style="left:958.0px;top:770px;width:66.0px">180</div>
<div class="dc" style="left:34.0px;top:789px;width:66.0px">6</div>
<div class="dr" style="left:99.0px;top:789px;width:63.8px">152</div>
<div class="dc" style="left:166.0px;top:789px;width:66.0px">31</div>
<div class="dr" style="left:231.0px;top:789px;width:63.8px">150</div>
<div class="dc" style="left:298.0px;top:789px;width:66.0px">56</div>
<div class="dc" style="left:430.0px;top:789px;width:66.0px">81</div>
<div class="dc" style="left:562.0px;top:789px;width:66.0px">106</div>
<div class="dc" style="left:694.0px;top:789px;width:66.0px">131</div>
<div class="dc" style="left:826.0px;top:789px;width:66.0px">156</div>
<div class="dc" style="left:958.0px;top:789px;width:66.0px">181</div>
<div class="dc" style="left:34.0px;top:808px;width:66.0px">7</div>
<div class="dr" style="left:99.0px;top:808px;width:63.8px">153</div>
<div class="dc" style="left:166.0px;top:808px;width:66.0px">32</div>
<div class="dr" style="left:231.0px;top:808px;width:63.8px">152</div>
<div class="dc" style="left:298.0px;top:808px;width:66.0px">57</div>
<div class="dc" style="left:430.0px;top:808px;width:66.0px">82</div>
<div class="dc" style="left:562.0px;top:808px;width:66.0px">107</div>
<div class="dc" style="left:694.0px;top:808px;width:66.0px">132</div>
<div class="dc" style="left:826.0px;top:808px;width:66.0px">157</div>
<div class="dc" style="left:958.0px;top:808px;width:66.0px">182</div>
<div class="dc" style="left:34.0px;top:827px;width:66.0px">8</div>
<div class="dr" style="left:99.0px;top:827px;width:63.8px">150</div>
<div class="dc" style="left:166.0px;top:827px;width:66.0px">33</div>
<div class="dc" style="left:298.0px;top:827px;width:66.0px">58</div>
<div class="dc" style="left:430.0px;top:827px;width:66.0px">83</div>
<div class="dc" style="left:562.0px;top:827px;width:66.0px">108</div>
<div class="dc" style="left:694.0px;top:827px;width:66.0px">133</div>
<div class="dc" style="left:826.0px;top:827px;width:66.0px">158</div>
<div class="dc" style="left:958.0px;top:827px;width:66.0px">183</div>
<div class="dc" style="left:34.0px;top:846px;width:66.0px">9</div>
<div class="dr" style="left:99.0px;top:846px;width:63.8px">154</div>
<div class="dc" style="left:166.0px;top:846px;width:66.0px">34</div>
<div class="dc" style="left:298.0px;top:846px;width:66.0px">59</div>
<div class="dc" style="left:430.0px;top:846px;width:66.0px">84</div>
<div class="dc" style="left:562.0px;top:846px;width:66.0px">109</div>
<div class="dc" style="left:694.0px;top:846px;width:66.0px">134</div>
<div class="dc" style="left:826.0px;top:846px;width:66.0px">159</div>
<div class="dc" style="left:958.0px;top:846px;width:66.0px">184</div>
<div class="dc" style="left:34.0px;top:865px;width:66.0px">10</div>
<div class="dr" style="left:99.0px;top:865px;width:63.8px">152</div>
<div class="dc" style="left:166.0px;top:865px;width:66.0px">35</div>
<div class="dc" style="left:298.0px;top:865px;width:66.0px">60</div>
<div class="dc" style="left:430.0px;top:865px;width:66.0px">85</div>
<div class="dc" style="left:562.0px;top:865px;width:66.0px">110</div>
<div class="dc" style="left:694.0px;top:865px;width:66.0px">135</div>
<div class="dc" style="left:826.0px;top:865px;width:66.0px">160</div>
<div class="dc" style="left:958.0px;top:865px;width:66.0px">185</div>
<div class="dc" style="left:34.0px;top:884px;width:66.0px">11</div>
<div class="dr" style="left:99.0px;top:884px;width:63.8px">152</div>
<div class="dc" style="left:166.0px;top:884px;width:66.0px">36</div>
<div class="dc" style="left:298.0px;top:884px;width:66.0px">61</div>
<div class="dc" style="left:430.0px;top:884px;width:66.0px">86</div>
<div class="dc" style="left:562.0px;top:884px;width:66.0px">111</div>
<div class="dc" style="left:694.0px;top:884px;width:66.0px">136</div>
<div class="dc" style="left:826.0px;top:884px;width:66.0px">161</div>
<div class="dc" style="left:958.0px;top:884px;width:66.0px">186</div>
<div class="dc" style="left:34.0px;top:903px;width:66.0px">12</div>
<div class="dr" style="left:99.0px;top:903px;width:63.8px">150</div>
<div class="dc" style="left:166.0px;top:903px;width:66.0px">37</div>
<div class="dc" style="left:298.0px;top:903px;width:66.0px">62</div>
<div class="dc" style="left:430.0px;top:903px;width:66.0px">87</div>
<div class="dc" style="left:562.0px;top:903px;width:66.0px">112</div>
<div class="dc" style="left:694.0px;top:903px;width:66.0px">137</div>
<div class="dc" style="left:826.0px;top:903px;width:66.0px">162</div>
<div class="dc" style="left:958.0px;top:903px;width:66.0px">187</div>
<div class="dc" style="left:34.0px;top:922px;width:66.0px">13</div>
<div class="dr" style="left:99.0px;top:922px;width:63.8px">151</div>
<div class="dc" style="left:166.0px;top:922px;width:66.0px">38</div>
<div class="dc" style="left:298.0px;top:922px;width:66.0px">63</div>
<div class="dc" style="left:430.0px;top:922px;width:66.0px">88</div>
<div class="dc" style="left:562.0px;top:922px;width:66.0px">113</div>
<div class="dc" style="left:694.0px;top:922px;width:66.0px">138</div>
<div class="dc" style="left:826.0px;top:922px;width:66.0px">163</div>
<div class="dc" style="left:958.0px;top:922px;width:66.0px">188</div>
<div class="dc" style="left:34.0px;top:941px;width:66.0px">14</div>
<div class="dr" style="left:99.0px;top:941px;width:63.8px">150</div>
<div class="dc" style="left:166.0px;top:941px;width:66.0px">39</div>
<div class="dc" style="left:298.0px;top:941px;width:66.0px">64</div>
<div class="dc" style="left:430.0px;top:941px;width:66.0px">89</div>
<div class="dc" style="left:562.0px;top:941px;width:66.0px">114</div>
<div class="dc" style="left:694.0px;top:941px;width:66.0px">139</div>
<div class="dc" style="left:826.0px;top:941px;width:66.0px">164</div>
<div class="dc" style="left:958.0px;top:941px;width:66.0px">189</div>
<div class="dc" style="left:34.0px;top:960px;width:66.0px">15</div>
<div class="dr" style="left:99.0px;top:960px;width:63.8px">153.5</div>
<div class="dc" style="left:166.0px;top:960px;width:66.0px">40</div>
<div class="dc" style="left:298.0px;top:960px;width:66.0px">65</div>
<div class="dc" style="left:430.0px;top:960px;width:66.0px">90</div>
<div class="dc" style="left:562.0px;top:960px;width:66.0px">115</div>
<div class="dc" style="left:694.0px;top:960px;width:66.0px">140</div>
<div class="dc" style="left:826.0px;top:960px;width:66.0px">165</div>
<div class="dc" style="left:958.0px;top:960px;width:66.0px">190</div>
<!-- bottom bar -->
<div class="abs" style="left:0;top:980px;width:1918px;height:38px;background:#f0f0f0"></div>
<div class="abs" style="left:0;top:979.5px;width:1894px;height:1px;background:#dcdcdc"></div>
<svg class="abs" style="left:0;top:980px" width="1918" height="38">
  <path d="M38.8 13l-6 6l6 6" fill="none" stroke="#8f8f8f" stroke-width="1.3"/>
  <path d="M73.2 13l6 6l-6 6" fill="none" stroke="#8f8f8f" stroke-width="1.3"/>
  <rect x="141" y="5" width="113" height="30" rx="4" fill="#134f69"/>
  <line x1="259.5" y1="8" x2="259.5" y2="31" stroke="#c8c8c8" stroke-width="1"/>
  <defs><linearGradient id="g1" x1="0" y1="0" x2="0" y2="1"><stop offset="0" stop-color="#ffffff"/><stop offset="1" stop-color="#a6dfca"/></linearGradient></defs>
  <path d="M258 0.5q6.5 0 6.5 6.5v22.5a6 6 0 0 0 6 6h39a6 6 0 0 0 6 -6v-22.5q0 -6.5 6.5 -6.5" fill="#fff" stroke="#dedede" stroke-width="1"/>
  <path d="M266 0v29a5 5 0 0 0 5 5h39a5 5 0 0 0 5 -5v-29z" fill="url(#g1)"/>
  <rect x="275" y="30" width="31" height="2" fill="#0a7a38"/>
  <line x1="321.5" y1="8" x2="321.5" y2="31" stroke="#c8c8c8" stroke-width="1"/>
  <path d="M381.4 12v14" stroke="#2a2a2a" stroke-width="1.1"/><path d="M374 18.9h14" stroke="#2a2a2a" stroke-width="1.6"/>
  <rect x="1154.5" y="14" width="2.6" height="2.6" fill="#111"/>
  <rect x="1154.5" y="19" width="2.6" height="2.6" fill="#111"/>
  <rect x="1154.5" y="24" width="2.6" height="2.6" fill="#111"/>
  <rect x="1176" y="9" width="720" height="20.5" rx="10" fill="#f5f5f5"/>
  <path d="M1183 19.5l7.5 -5.5v11z" fill="#707070" stroke="#707070" stroke-width="1" stroke-linejoin="round"/>
  <rect x="1197" y="14" width="678" height="11" rx="5.5" fill="#707070"/>
  <path d="M1890.5 19.5l-7.5 -5.5v11z" fill="#707070" stroke="#707070" stroke-width="1" stroke-linejoin="round"/>
</svg>
<div class="txt" style="left:141px;top:990px;width:113px;text-align:center;color:#fff;font-size:18px;line-height:22px"><span style="display:inline-block;transform:scaleX(0.975);transform-origin:50% 50%">Instructions</span></div>
<div class="txt" style="left:266px;top:986px;width:50px;text-align:center;color:#111;font-size:18px;line-height:22px"><span style="display:inline-block;transform:scaleX(0.84);transform-origin:50% 50%">SPC</span></div>
</body></html>
